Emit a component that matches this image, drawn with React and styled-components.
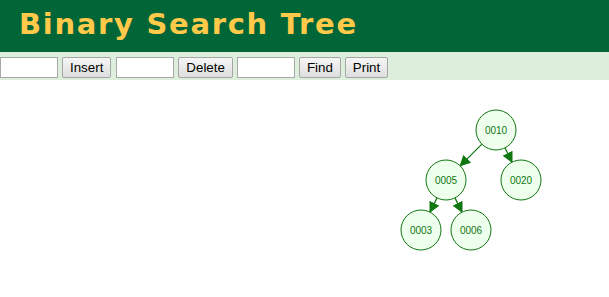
import React from "react";
import styled, { createGlobalStyle } from "styled-components";

const Global = createGlobalStyle`
  html, body { margin: 0; padding: 0; background: #fff; }
  body { font-family: "Liberation Sans", Arial, sans-serif; }
`;

const Header = styled.header`
  background: #006637;
  height: 52px;
  box-sizing: border-box;
  display: flex;
  align-items: flex-start;
  padding: 7px 0 0 19px;
`;

const Title = styled.h1`
  margin: 0;
  font-family: "DejaVu Sans", Verdana, sans-serif;
  font-weight: bold;
  font-size: 29px;
  line-height: 34px;
  color: #ffc94a;
  letter-spacing: 1.7px;
`;

const Toolbar = styled.div`
  background: #ddeedd;
  height: 28px;
  box-sizing: border-box;
  padding-top: 5px;
  display: flex;
  align-items: flex-start;
  gap: 4px;
`;

const Field = styled.input`
  box-sizing: border-box;
  width: 58px;
  height: 21px;
  border: 1px solid #a9a9a9;
  background: #fff;
  margin: 0 0 0 ${(p) => p.$shift || 0}px;
  padding: 0 2px;
`;

const Button = styled.button`
  box-sizing: border-box;
  height: 21px;
  padding: 0 7px;
  margin: 0;
  font-family: "Liberation Sans", Arial, sans-serif;
  font-size: 13.33px;
  color: #000;
  border: 1px solid #a6a6a6;
  border-radius: 2px;
  background: linear-gradient(#f6f6f6, #dedede);
`;

const Canvas = styled.div`
  position: relative;
  height: 217px;
`;

const nodes = [
  { id: "0010", x: 496, y: 130 },
  { id: "0005", x: 446, y: 180 },
  { id: "0020", x: 521, y: 180 },
  { id: "0003", x: 421, y: 230 },
  { id: "0006", x: 471, y: 230 },
];
const edges = [
  ["0010", "0005"],
  ["0010", "0020"],
  ["0005", "0003"],
  ["0005", "0006"],
];
const R = 20;

function Tree() {
  const byId = Object.fromEntries(nodes.map((n) => [n.id, n]));
  const off = 80;
  return (
    <svg width="609" height="217" style={{ position: "absolute", left: 0, top: 0 }}>
      <defs>
        <marker id="ah" markerWidth="11" markerHeight="11" refX="10" refY="5.5" orient="auto" markerUnits="userSpaceOnUse">
          <path d="M0,0 L11,5.5 L0,11 z" fill="#117711" />
        </marker>
      </defs>
      {edges.map(([a, b]) => {
        const p = byId[a], c = byId[b];
        const dx = c.x - p.x, dy = c.y - p.y;
        const d = Math.hypot(dx, dy);
        const ux = dx / d, uy = dy / d;
        return (
          <line
            key={a + b}
            x1={p.x + ux * R}
            y1={p.y - off + uy * R}
            x2={c.x - ux * R}
            y2={c.y - off - uy * R}
            stroke="#117711"
            strokeWidth="1.2"
            markerEnd="url(#ah)"
          />
        );
      })}
      {nodes.map((n) => (
        <g key={n.id}>
          <circle cx={n.x} cy={n.y - off} r={R} fill="#eeffee" stroke="#117711" strokeWidth="1" />
          <text
            x={n.x}
            y={n.y - off + 3.5}
            textAnchor="middle"
            fontFamily="Liberation Sans, Arial, sans-serif"
            fontSize="10"
            fill="#117711"
          >
            {n.id}
          </text>
        </g>
      ))}
    </svg>
  );
}

export default function App() {
  return (
    <>
      <Global />
      <Header>
        <Title>Binary Search Tree</Title>
      </Header>
      <Toolbar>
        <Field />
        <Button>Insert</Button>
        <Field $shift={1} />
        <Button>Delete</Button>
        <Field />
        <Button>Find</Button>
        <Button>Print</Button>
      </Toolbar>
      <Canvas>
        <Tree />
      </Canvas>
    </>
  );
}
